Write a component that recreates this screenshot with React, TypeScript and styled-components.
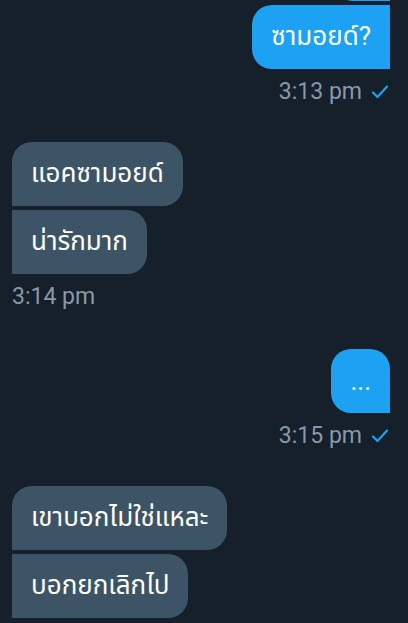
import React from "react";
import styled, { createGlobalStyle } from "styled-components";

const GlobalStyle = createGlobalStyle`
  html, body {
    margin: 0;
    padding: 0;
    background: #15202b;
  }
  body {
    font-family: Roboto, "Noto Sans Thai", "Noto Sans", "DejaVu Sans", sans-serif;
  }
  #root { overflow: hidden; height: 623px; }
`;

const Page = styled.div`
  display: flex;
  flex-direction: column;
  padding: 0 18px 0 12px;
  background: #15202b;
  min-height: 623px;
  box-sizing: border-box;
`;

const Group = styled.div<{ $side: "sent" | "received"; $top: number }>`
  display: flex;
  flex-direction: column;
  gap: 4px;
  align-items: ${(p) => (p.$side === "sent" ? "flex-end" : "flex-start")};
  margin-top: ${(p) => p.$top}px;
`;

const Bubble = styled.div<{ $side: "sent" | "received"; $first: boolean }>`
  box-sizing: border-box;
  height: 64px;
  min-width: 57px;
  display: flex;
  align-items: center;
  justify-content: center;
  padding: 0 19px 0 19px;
  font-size: 26px;
  color: #ffffff;
  white-space: nowrap;
  background: ${(p) => (p.$side === "sent" ? "#1da1f2" : "#3d5466")};
  border-radius: ${(p) =>
    p.$side === "sent"
      ? p.$first
        ? "20px 20px 0 20px"
        : "20px 0 0 20px"
      : p.$first
      ? "20px 20px 20px 0"
      : "0 20px 20px 0"};
`;

const Meta = styled.div<{ $side: "sent" | "received" }>`
  display: flex;
  align-items: center;
  gap: 10px;
  justify-content: ${(p) => (p.$side === "sent" ? "flex-end" : "flex-start")};
  margin-top: 11px;
  height: 24px;
  font-size: 23px;
  line-height: 24px;
  color: #8899a6;
  padding-right: ${(p) => (p.$side === "sent" ? "2px" : "0")};
`;

const Check = () => (
  <svg width="16" height="14" viewBox="0 0 16 14" fill="none">
    <path d="M1 7.5 L5.5 12 L15 1.5" stroke="#1da1f2" strokeWidth="2.2" strokeLinecap="round" strokeLinejoin="round" />
  </svg>
);

type Side = "sent" | "received";

const Messages = ({ side, texts, time, top }: { side: Side; texts: string[]; time?: string; top: number }) => (
  <>
    <Group $side={side} $top={top}>
      {texts.map((t, i) => (
        <Bubble key={i} $side={side} $first={i === 0}>
          {t}
        </Bubble>
      ))}
    </Group>
    {time && (
      <Meta $side={side}>
        <span>{time}</span>
        {side === "sent" && <Check />}
      </Meta>
    )}
  </>
);

export default function App() {
  return (
    <>
      <GlobalStyle />
      <Page>
        <Messages side="sent" texts={["", "ซามอยด์?"]} time="3:13 pm" top={-63} />
        <Messages side="received" texts={["แอคซามอยด์", "น่ารักมาก"]} time="3:14 pm" top={38} />
        <Messages side="sent" texts={["..."]} time="3:15 pm" top={40} />
        <Messages side="received" texts={["เขาบอกไม่ใช่แหละ", "บอกยกเลิกไป"]} top={38} />
      </Page>
    </>
  );
}
